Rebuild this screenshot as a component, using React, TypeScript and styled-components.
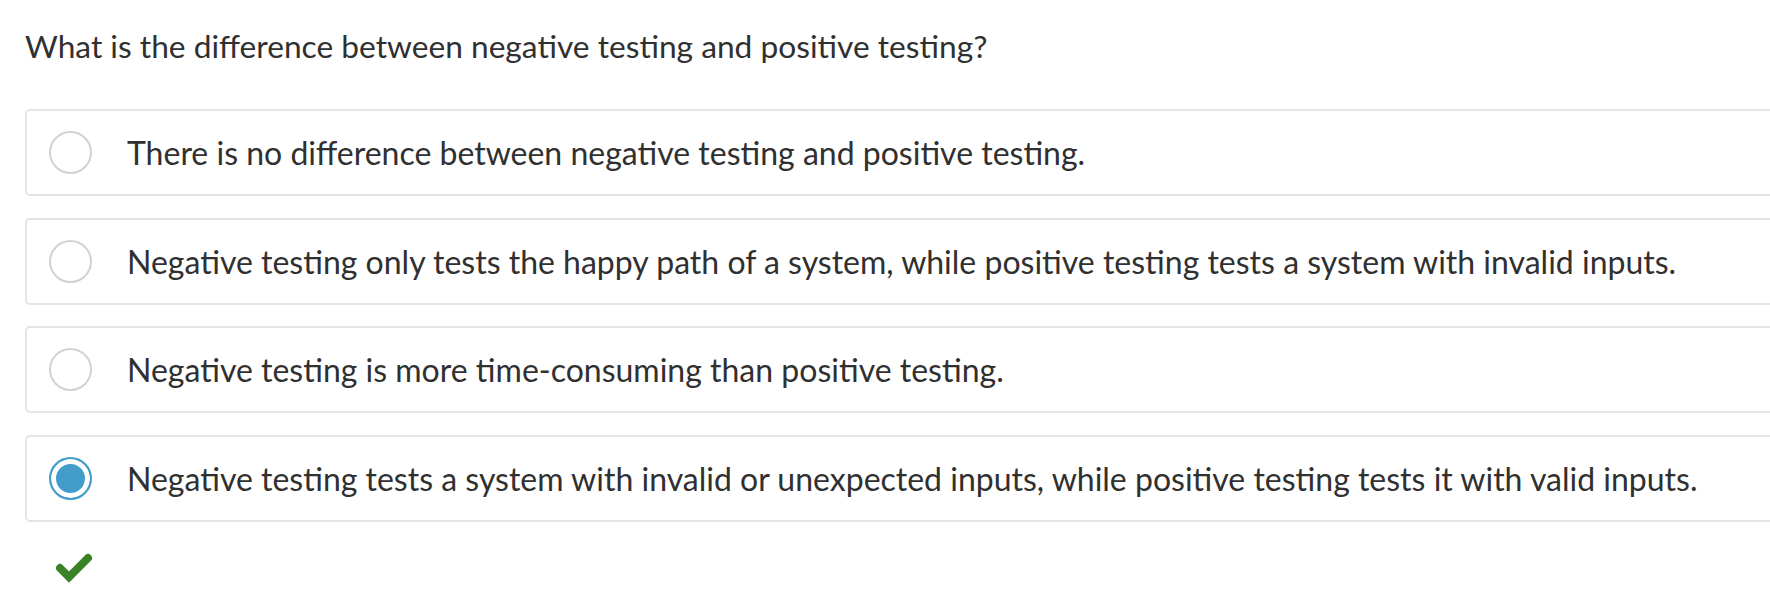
import styled, { createGlobalStyle } from "styled-components";

const GlobalStyle = createGlobalStyle`
    body {
        margin: 0;
        background: #ffffff;
        overflow: hidden;
        font-family: "Source Sans Pro", Lato, "Liberation Sans", sans-serif;
        color: #303030;
    }
`;

const Page = styled.div`
    padding: 24px 0 0 25px;
`;

const Question = styled.p`
    margin: 0;
    font-size: 31.7px;
    line-height: 44px;
`;

const Options = styled.div`
    display: flex;
    flex-direction: column;
    gap: 21.5px;
    margin-top: 41px;
    width: calc(100% + 40px);
`;

const Option = styled.label`
    display: flex;
    align-items: center;
    box-sizing: border-box;
    height: 87px;
    padding-left: 22px;
    border: 2px solid #e4e4e4;
    border-radius: 5px;
    cursor: pointer;
`;

const Radio = styled.span<{ $checked?: boolean }>`
    flex: none;
    box-sizing: border-box;
    width: 43px;
    height: 43px;
    border-radius: 50%;
    border: 2px solid ${(p) => (p.$checked ? "#439dca" : "#d2d2d2")};
    background: ${(p) => (p.$checked ? "#439dca" : "#ffffff")};
    box-shadow: ${(p) => (p.$checked ? "inset 0 0 0 5px #ffffff" : "none")};
`;

const OptionText = styled.span`
    margin-left: 35px;
    font-size: 32px;
    white-space: nowrap;
`;

const Result = styled.div`
    margin-top: 31px;
    padding-left: 30px;
`;

const options = [
    "There is no difference between negative testing and positive testing.",
    "Negative testing only tests the happy path of a system, while positive testing tests a system with invalid inputs.",
    "Negative testing is more time-consuming than positive testing.",
    "Negative testing tests a system with invalid or unexpected inputs, while positive testing tests it with valid inputs.",
];

export default function App() {
    const selected = 3;

    return (
        <Page>
            <GlobalStyle />
            <Question>What is the difference between negative testing and positive testing?</Question>
            <Options>
                {options.map((text, i) => (
                    <Option key={i}>
                        <Radio $checked={i === selected} />
                        <OptionText>{text}</OptionText>
                    </Option>
                ))}
            </Options>
            <Result>
                <svg width="38" height="30" viewBox="0 0 38 30">
                    <polyline
                        points="5,15 14,24 33,5"
                        fill="none"
                        stroke="#3a8226"
                        strokeWidth="8"
                        strokeLinecap="round"
                        strokeLinejoin="miter"
                    />
                </svg>
            </Result>
        </Page>
    );
}
